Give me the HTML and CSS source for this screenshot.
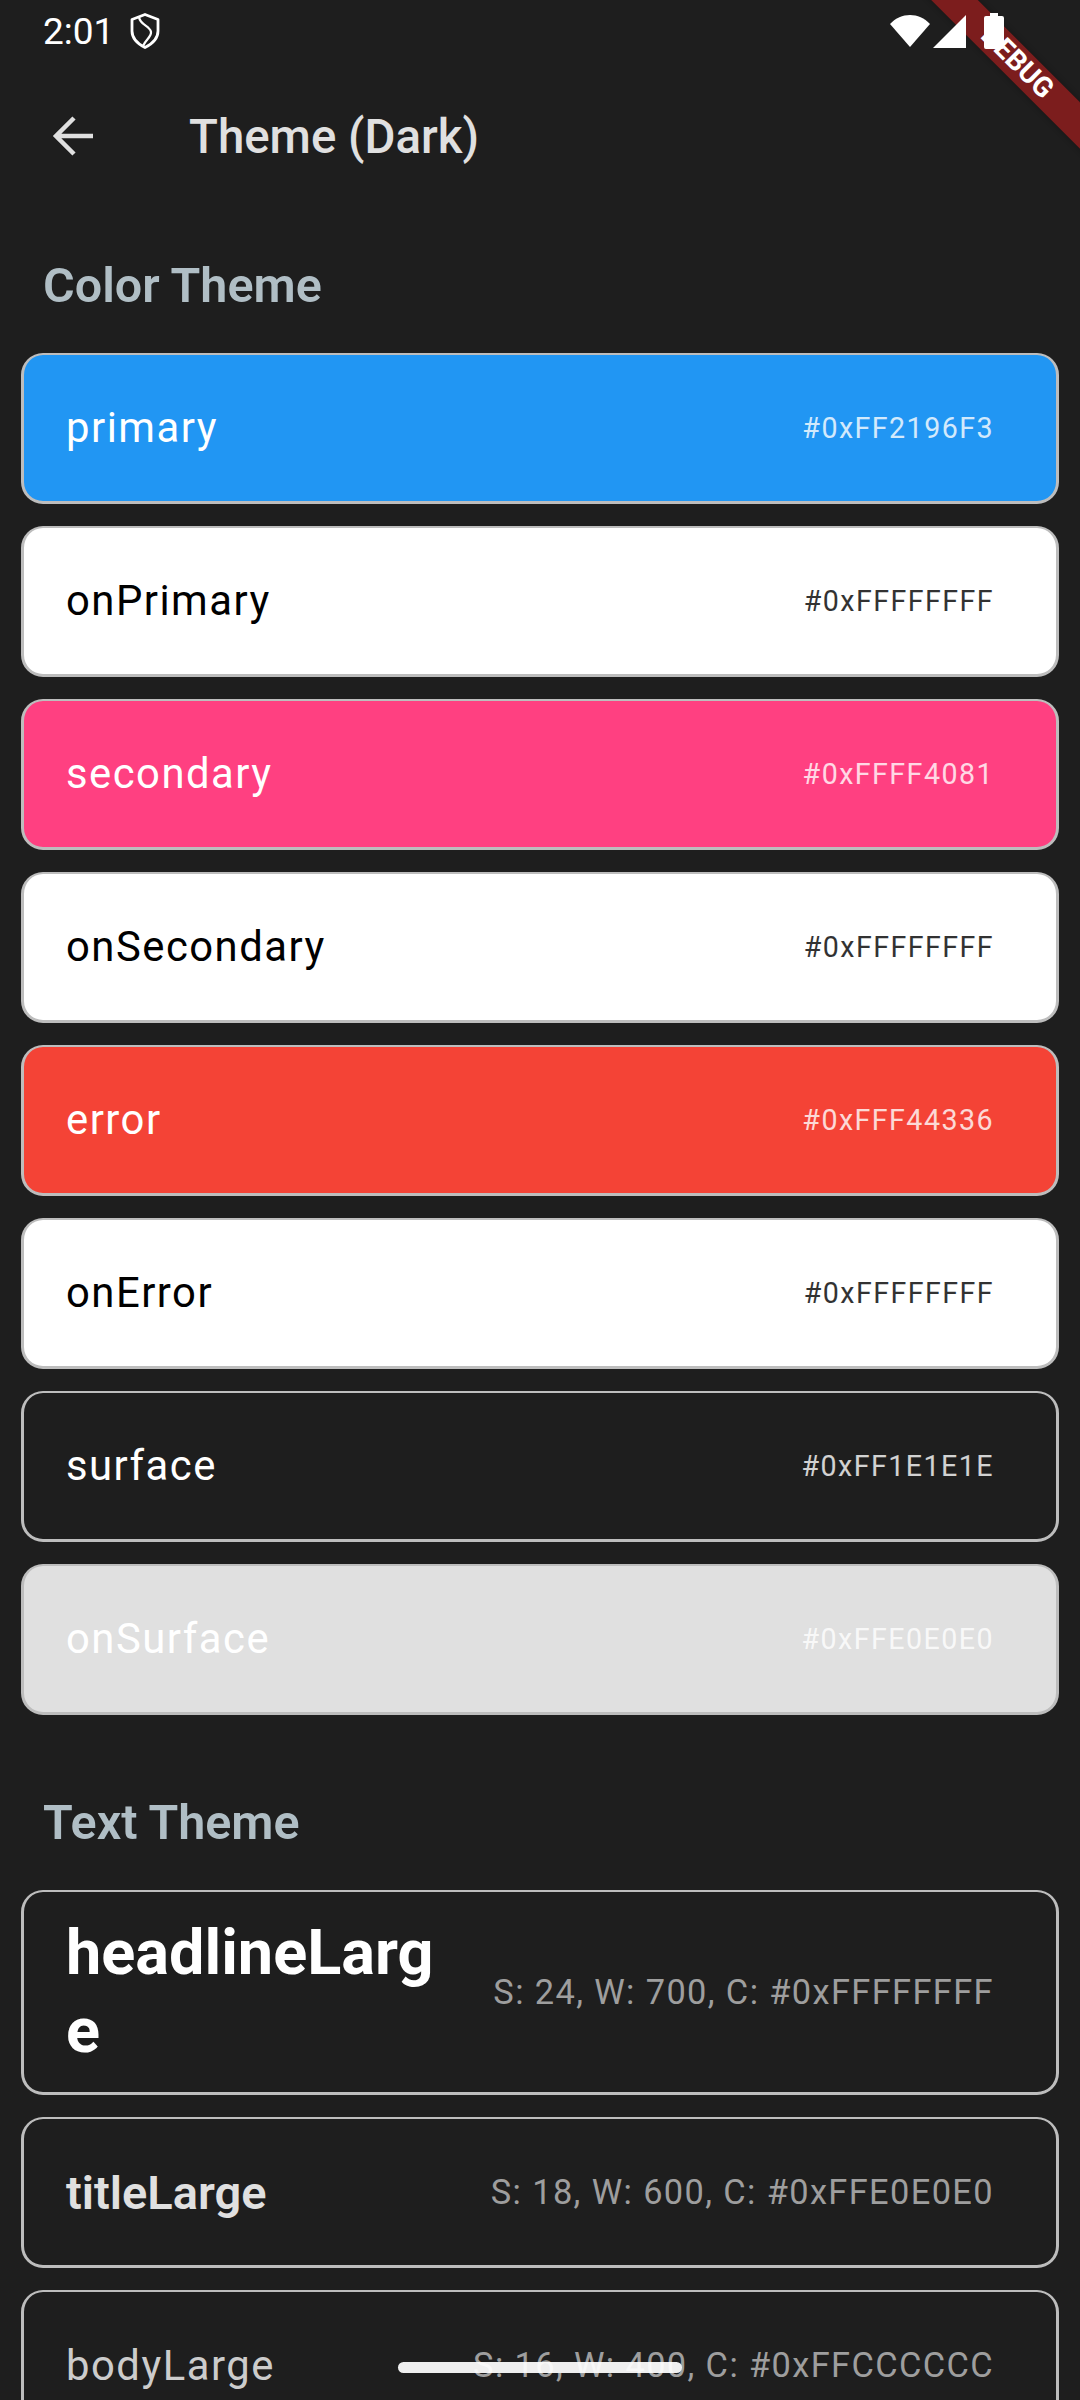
FILE: index.html
```html
<!DOCTYPE html>
<html lang="en">

<head>
  <meta charset="UTF-8">
  <title>Theme (Dark)</title>
  <link rel="stylesheet" href="styles.css">
</head>

<body>
  <div class="status-bar">
    <span class="clock">2:01</span>
    <svg class="shield" viewBox="0 0 30 36" width="30" height="36">
      <path d="M15 1.500 L28 6.500 V18 C28 26 22 31 15 34.500 C8 31 2 26 2 18 V6.500 Z" fill="none" stroke="#fff" stroke-width="2.800" stroke-linejoin="round"/>
      <path d="M9 4 C10 12 20 13 21 19 C21.500 24 16 26 13 33" fill="none" stroke="#fff" stroke-width="2.200"/>
    </svg>
    <div class="status-icons">
      <svg class="wifi" viewBox="0 0 40 34" width="40" height="34"><path d="M0 10 C11 -2 29 -2 40 10 L20 33 Z" fill="#fff"/></svg>
      <svg class="signal" viewBox="0 0 33 33" width="33" height="33"><path d="M33 0 V33 H0 Z" fill="#fff"/></svg>
      <svg class="battery" viewBox="0 0 22 36" width="22" height="36"><path d="M7 0 H15 V3 H19 Q21 3 21 5 V34 Q21 36 19 36 H3 Q1 36 1 34 V5 Q1 3 3 3 H7 Z" fill="#fff"/></svg>
    </div>
  </div>

  <header class="app-bar">
    <svg class="back" viewBox="0 0 42 42" width="42" height="42">
      <path d="M41 21 H4 M22 3 L4 21 L22 39" fill="none" stroke="#e0e0e0" stroke-width="4.500"/>
    </svg>
    <h1 class="app-title">Theme (Dark)</h1>
  </header>

  <h2 class="section-title first">Color Theme</h2>
  <div class="list">
    <div class="row primary"><span class="name">primary</span><span class="hex">#0xFF2196F3</span></div>
    <div class="row light"><span class="name">onPrimary</span><span class="hex">#0xFFFFFFFF</span></div>
    <div class="row secondary"><span class="name">secondary</span><span class="hex">#0xFFFF4081</span></div>
    <div class="row light"><span class="name">onSecondary</span><span class="hex">#0xFFFFFFFF</span></div>
    <div class="row error"><span class="name">error</span><span class="hex">#0xFFF44336</span></div>
    <div class="row light"><span class="name">onError</span><span class="hex">#0xFFFFFFFF</span></div>
    <div class="row surface"><span class="name">surface</span><span class="hex">#0xFF1E1E1E</span></div>
    <div class="row on-surface"><span class="name">onSurface</span><span class="hex">#0xFFE0E0E0</span></div>
  </div>

  <h2 class="section-title">Text Theme</h2>
  <div class="list">
    <div class="row text-row"><span class="name headline">headlineLarge</span><span class="spec">S: 24, W: 700, C: #0xFFFFFFFF</span></div>
    <div class="row text-row"><span class="name title">titleLarge</span><span class="spec">S: 18, W: 600, C: #0xFFE0E0E0</span></div>
    <div class="row text-row"><span class="name body-text">bodyLarge</span><span class="spec">S: 16, W: 400, C: #0xFFCCCCCC</span></div>
  </div>

  <div class="debug-banner"><span>DEBUG</span></div>
  <div class="home-bar"></div>
</body>

</html>
```

FILE: styles.css
```css
html, body {
  margin: 0;
  height: 2400px;
  overflow: hidden;
}

body {
  position: relative;
  background: #1e1e1e;
  color: #e0e0e0;
  font-family: Roboto, "Noto Sans", sans-serif;
}

/* status bar */

.status-bar {
  position: relative;
  z-index: 2;
  display: flex;
  align-items: center;
  height: 62px;
  padding: 0 75px 0 43px;
  color: #fff;
}

.clock {
  font-size: 37px;
}

.shield {
  margin-left: 16px;
}

.status-icons {
  display: flex;
  align-items: center;
  margin-left: auto;
}

.signal {
  margin-left: 3px;
}

.battery {
  margin-left: 17px;
}

/* app bar */

.app-bar {
  display: flex;
  align-items: center;
  height: 148px;
  padding-left: 52px;
}

.app-title {
  margin: 2px 0 0 95px;
  font-size: 47.400px;
  font-weight: 500;
}

/* sections */

.section-title {
  margin: 83px 0 0 43px;
  height: 49px;
  line-height: 50px;
  font-size: 48.500px;
  font-weight: 600;
  color: #b0bec5;
}

.section-title.first {
  margin-top: 51px;
}

.list {
  display: flex;
  flex-direction: column;
  gap: 22px;
  margin: 43px 21px 0;
}

.row {
  display: flex;
  align-items: center;
  justify-content: space-between;
  box-sizing: border-box;
  min-height: 151px;
  padding: 22px 62px 22px 42px;
  border: 3px solid #bdbdbd;
  border-top-width: 2px;
  border-radius: 22px;
  color: #fff;
}

.name {
  padding-bottom: 1px;
  font-size: 41.800px;
  letter-spacing: 1.500px;
}

.hex {
  font-size: 28.600px;
  letter-spacing: 1.460px;
  opacity: 0.8;
}

.primary { background: #2196f3; }
.secondary { background: #ff4081; }
.error { background: #f44336; }
.surface { background: #1e1e1e; }
.on-surface { background: #e0e0e0; }

.light {
  background: #fff;
  color: #000;
}

/* text theme rows */

.text-row {
  background: #1e1e1e;
}

.spec {
  flex: none;
  font-size: 34.400px;
  letter-spacing: 1.375px;
  color: #9e9e9e;
}

.headline {
  flex: none;
  width: 375px;
  padding-bottom: 0;
  font-size: 63px;
  font-weight: 700;
  line-height: 78px;
  letter-spacing: 0;
  word-break: break-all;
}

.title {
  padding-bottom: 0;
  font-size: 47px;
  font-weight: 600;
  letter-spacing: 0;
  color: #e0e0e0;
}

.body-text {
  padding-bottom: 0;
  color: #ccc;
}

/* overlays */

.debug-banner {
  position: absolute;
  top: 0;
  right: 0;
  width: 170px;
  height: 170px;
  overflow: hidden;
}

.debug-banner span {
  position: absolute;
  top: 46px;
  left: -43px;
  width: 300px;
  height: 33px;
  line-height: 31px;
  background: #7c1d1d;
  box-shadow: 0 0 6px rgba(0, 0, 0, 0.3);
  color: #fff;
  font-size: 28px;
  font-weight: 700;
  text-align: center;
  transform: rotate(45deg);
}

.home-bar {
  position: absolute;
  left: 398px;
  top: 2362px;
  width: 284px;
  height: 11px;
  border-radius: 6px;
  background: rgba(255, 255, 255, 0.93);
}
```
